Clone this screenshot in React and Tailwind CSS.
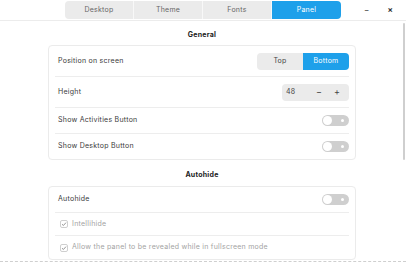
import { useState } from "react";

const font = { fontFamily: "Inter, 'Noto Sans', sans-serif" };

function Toggle() {
  return (
    <div className="w-[27px] h-[11px] rounded-full bg-[#cfcfcf] flex items-center justify-between px-[1px]">
      <div className="w-[9px] h-[9px] rounded-full bg-white" />
      <div className="w-[3px] h-[3px] rounded-full bg-white mr-[4px]" />
    </div>
  );
}

function Check() {
  return (
    <div className="w-[8px] h-[8px] rounded-[2px] border border-[#cfcfcf] bg-white flex items-center justify-center">
      <svg width="6" height="6" viewBox="0 0 6 6">
        <path d="M1 3.2 L2.4 4.5 L5 1.6" fill="none" stroke="#8a8a8a" strokeWidth="0.9" />
      </svg>
    </div>
  );
}

function App() {
  const [tab] = useState("Panel");
  const tabs = ["Desktop", "Theme", "Fonts", "Panel"];

  return (
    <div className="relative w-[406px] h-[264px] bg-white text-[#3a3a3a] overflow-hidden tracking-[0.25px]" style={font}>
      {/* Header */}
      <div className="h-[21px] border-b border-[#ececec] flex items-start pt-[1px]">
        <div className="ml-[65px] flex h-[18px]">
          {tabs.map((t, i) => (
            <div
              key={t}
              className={
                "w-[69px] flex items-center justify-center text-[7px] " +
                (t === tab
                  ? "bg-[#1ea0ea] text-white rounded-r-[4px]"
                  : "bg-[#ebebeb] text-[#666] border-r border-[#f8f8f8]") +
                (i === 0 ? " rounded-l-[4px]" : "")
              }
            >
              {t}
            </div>
          ))}
        </div>
        <div className="ml-[23px] h-[18px] flex items-center text-[8px] text-[#333]">−</div>
        <div className="ml-[18px] h-[18px] flex items-center text-[8px] text-[#333] font-bold">×</div>
      </div>

      {/* Scrollbar */}
      <div className="absolute left-[403px] top-[23px] w-[2px] h-[137px] bg-[#cfcfcf] rounded-full" />

      {/* Content */}
      <div className="pl-[48px] w-[356px]">
        <div className="h-[24px] pt-[4px] flex items-center justify-center text-[7px] font-bold text-[#222]">General</div>
        <div className="border border-[#ebebeb] rounded-[4px] px-[6px] text-[7px]">
          <div className="h-[31px] flex items-center justify-between border-b border-[#ededed] pl-[3px]">
            <span>Position on screen</span>
            <div className="flex h-[17px] rounded-[4px] overflow-hidden">
              <div className="w-[46px] bg-[#ebebeb] flex items-center justify-center text-[#444]">Top</div>
              <div className="w-[46px] bg-[#1ea0ea] flex items-center justify-center text-white">Bottom</div>
            </div>
          </div>
          <div className="h-[31px] flex items-center justify-between border-b border-[#ededed] pl-[3px]">
            <span>Height</span>
            <div className="w-[67px] h-[17px] rounded-[4px] bg-[#ebebeb] flex items-center pl-[4px] text-[#444]">
              <span className="w-[23px]">48</span>
              <span className="w-[20px] text-center text-[9px]">−</span>
              <span className="w-[16px] text-center text-[9px]">+</span>
            </div>
          </div>
          <div className="h-[26px] flex items-center justify-between border-b border-[#ededed] pl-[3px]">
            <span>Show Activities Button</span>
            <Toggle />
          </div>
          <div className="h-[25px] flex items-center justify-between pl-[3px]">
            <span>Show Desktop Button</span>
            <Toggle />
          </div>
        </div>

        <div className="h-[26px] pt-[5px] flex items-center justify-center text-[7px] font-bold text-[#222]">Autohide</div>
        <div className="border border-[#ebebeb] rounded-[4px] px-[6px] text-[7px]">
          <div className="h-[26px] flex items-center justify-between border-b border-[#ededed] pl-[3px]">
            <span>Autohide</span>
            <Toggle />
          </div>
          <div className="h-[23px] flex items-center gap-[4px] border-b border-[#ededed] pl-[5px] text-[#a3a3a3]">
            <Check />
            <span>Intellihide</span>
          </div>
          <div className="h-[23px] flex items-center gap-[4px] pl-[5px] text-[#a3a3a3]">
            <Check />
            <span>Allow the panel to be revealed while in fullscreen mode</span>
          </div>
        </div>
      </div>

      <div className="absolute left-0 right-0 top-[261px] border-t border-dashed border-[#cfcfcf]" />
    </div>
  );
}

export default App;
